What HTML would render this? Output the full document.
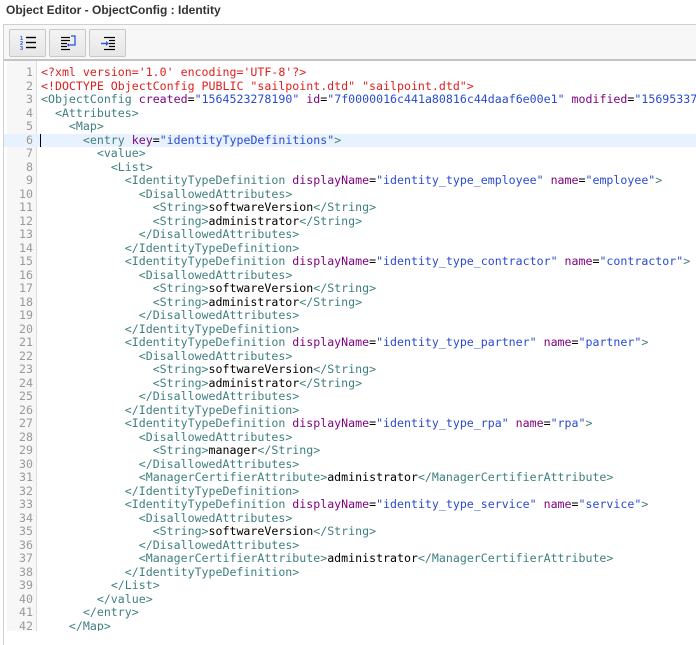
<!DOCTYPE html>
<html><head><meta charset="utf-8">
<style>
html,body{margin:0;padding:0;background:#fff;width:696px;height:623px;overflow:hidden}
.title{position:absolute;left:6px;top:3px;font:bold 12px "Liberation Sans",sans-serif;color:#333}
.panel{position:absolute;left:3px;top:24px;width:700px;height:620px;border-left:1px solid #d0d0d0;border-top:1px solid #d0d0d0}
.tb{position:absolute;left:4px;top:25px;width:700px;height:34px;background:#f7f7f7;border-bottom:2px solid #c4c4c4}
.btn{position:absolute;top:4px;width:35px;height:26px;border:1px solid #c8c8c8;border-radius:2px;background:linear-gradient(#f4f4f4,#e6e6e6)}
.btn svg{position:absolute;left:9px;top:5px}
.ed{position:absolute;left:4px;top:61px;width:700px;height:570px;background:#fff;overflow:hidden}
.gut{position:absolute;left:3px;top:0;width:29px;height:570px;background:#f7f7f7;border-right:1px solid #ddd}
.code{position:absolute;left:0;top:5px;width:700px;font:11.6px/13.5px "DejaVu Sans Mono",monospace}
.ln{height:13.5px;position:relative}
.ln .n{position:absolute;left:3px;width:26px;text-align:right;color:#999}
.ln .t{position:absolute;left:37px;color:#000;white-space:pre}
.act{background:#e8f2ff}
.p{color:#e01f1f}.g{color:#3f7f7f}.a{color:#7f007f}.v{color:#2a4bd0}.k{color:#000}
.cur{position:absolute;left:36px;top:0;width:1px;height:13.5px;background:#000}
</style></head><body>
<div class="title">Object Editor - ObjectConfig : Identity</div>
<div class="panel"></div>
<div class="tb">
 <div class="btn" style="left:5px"><svg width="18" height="16" viewBox="0 0 18 16"><g fill="#2b55d8" font-family="Liberation Sans" font-size="5.5" font-weight="bold"><text x="1" y="5">1</text><text x="1" y="10">2</text><text x="1" y="15">3</text></g><g stroke="#000" stroke-width="1.4"><line x1="7" y1="2.5" x2="17" y2="2.5"/><line x1="7" y1="7.5" x2="17" y2="7.5"/><line x1="7" y1="12.5" x2="17" y2="12.5"/></g></svg></div>
 <div class="btn" style="left:45px"><svg width="18" height="16" viewBox="0 0 18 16"><g stroke="#000" stroke-width="1.2"><line x1="2" y1="2.5" x2="11" y2="2.5"/><line x1="2" y1="5.5" x2="11" y2="5.5"/><line x1="2" y1="8.5" x2="8" y2="8.5"/><line x1="2" y1="11.5" x2="8" y2="11.5"/><line x1="2" y1="14.5" x2="11" y2="14.5"/></g><path d="M12 1h4v9h-6" fill="none" stroke="#2b55d8" stroke-width="1.3"/><path d="M10 8l-2 2 2 2z" fill="#2b55d8"/></svg></div>
 <div class="btn" style="left:85px"><svg width="18" height="16" viewBox="0 0 18 16"><g stroke="#000" stroke-width="1.2"><line x1="5" y1="2.5" x2="16" y2="2.5"/><line x1="10" y1="5.5" x2="16" y2="5.5"/><line x1="10" y1="8.5" x2="16" y2="8.5"/><line x1="10" y1="11.5" x2="16" y2="11.5"/><line x1="5" y1="14.5" x2="16" y2="14.5"/></g><path d="M2 8.5h5" stroke="#2b55d8" stroke-width="1.4"/><path d="M7 6l3 2.5-3 2.5z" fill="#2b55d8"/></svg></div>
</div>
<div class="ed">
<div class="gut"></div>
<div class="code">
<div class="ln"><span class="n">1</span><span class="t"><span class="p">&lt;?xml version='1.0' encoding='UTF-8'?&gt;</span></span></div>
<div class="ln"><span class="n">2</span><span class="t"><span class="p">&lt;!DOCTYPE ObjectConfig PUBLIC "sailpoint.dtd" "sailpoint.dtd"&gt;</span></span></div>
<div class="ln"><span class="n">3</span><span class="t"><span class="g">&lt;ObjectConfig</span> <span class="a">created</span>=<span class="v">"1564523278190"</span> <span class="a">id</span>=<span class="v">"7f0000016c441a80816c44daaf6e00e1"</span> <span class="a">modified</span>=<span class="v">"1569533700000"</span></span></div>
<div class="ln"><span class="n">4</span><span class="t">  <span class="g">&lt;Attributes&gt;</span></span></div>
<div class="ln"><span class="n">5</span><span class="t">    <span class="g">&lt;Map&gt;</span></span></div>
<div class="ln act"><span class="n">6</span><span class="cur"></span><span class="t">      <span class="g">&lt;entry</span> <span class="a">key</span>=<span class="v">"identityTypeDefinitions"</span><span class="g">&gt;</span></span></div>
<div class="ln"><span class="n">7</span><span class="t">        <span class="g">&lt;value&gt;</span></span></div>
<div class="ln"><span class="n">8</span><span class="t">          <span class="g">&lt;List&gt;</span></span></div>
<div class="ln"><span class="n">9</span><span class="t">            <span class="g">&lt;IdentityTypeDefinition</span> <span class="a">displayName</span>=<span class="v">"identity_type_employee"</span> <span class="a">name</span>=<span class="v">"employee"</span><span class="g">&gt;</span></span></div>
<div class="ln"><span class="n">10</span><span class="t">              <span class="g">&lt;DisallowedAttributes&gt;</span></span></div>
<div class="ln"><span class="n">11</span><span class="t">                <span class="g">&lt;String&gt;</span>softwareVersion<span class="g">&lt;/String&gt;</span></span></div>
<div class="ln"><span class="n">12</span><span class="t">                <span class="g">&lt;String&gt;</span>administrator<span class="g">&lt;/String&gt;</span></span></div>
<div class="ln"><span class="n">13</span><span class="t">              <span class="g">&lt;/DisallowedAttributes&gt;</span></span></div>
<div class="ln"><span class="n">14</span><span class="t">            <span class="g">&lt;/IdentityTypeDefinition&gt;</span></span></div>
<div class="ln"><span class="n">15</span><span class="t">            <span class="g">&lt;IdentityTypeDefinition</span> <span class="a">displayName</span>=<span class="v">"identity_type_contractor"</span> <span class="a">name</span>=<span class="v">"contractor"</span><span class="g">&gt;</span></span></div>
<div class="ln"><span class="n">16</span><span class="t">              <span class="g">&lt;DisallowedAttributes&gt;</span></span></div>
<div class="ln"><span class="n">17</span><span class="t">                <span class="g">&lt;String&gt;</span>softwareVersion<span class="g">&lt;/String&gt;</span></span></div>
<div class="ln"><span class="n">18</span><span class="t">                <span class="g">&lt;String&gt;</span>administrator<span class="g">&lt;/String&gt;</span></span></div>
<div class="ln"><span class="n">19</span><span class="t">              <span class="g">&lt;/DisallowedAttributes&gt;</span></span></div>
<div class="ln"><span class="n">20</span><span class="t">            <span class="g">&lt;/IdentityTypeDefinition&gt;</span></span></div>
<div class="ln"><span class="n">21</span><span class="t">            <span class="g">&lt;IdentityTypeDefinition</span> <span class="a">displayName</span>=<span class="v">"identity_type_partner"</span> <span class="a">name</span>=<span class="v">"partner"</span><span class="g">&gt;</span></span></div>
<div class="ln"><span class="n">22</span><span class="t">              <span class="g">&lt;DisallowedAttributes&gt;</span></span></div>
<div class="ln"><span class="n">23</span><span class="t">                <span class="g">&lt;String&gt;</span>softwareVersion<span class="g">&lt;/String&gt;</span></span></div>
<div class="ln"><span class="n">24</span><span class="t">                <span class="g">&lt;String&gt;</span>administrator<span class="g">&lt;/String&gt;</span></span></div>
<div class="ln"><span class="n">25</span><span class="t">              <span class="g">&lt;/DisallowedAttributes&gt;</span></span></div>
<div class="ln"><span class="n">26</span><span class="t">            <span class="g">&lt;/IdentityTypeDefinition&gt;</span></span></div>
<div class="ln"><span class="n">27</span><span class="t">            <span class="g">&lt;IdentityTypeDefinition</span> <span class="a">displayName</span>=<span class="v">"identity_type_rpa"</span> <span class="a">name</span>=<span class="v">"rpa"</span><span class="g">&gt;</span></span></div>
<div class="ln"><span class="n">28</span><span class="t">              <span class="g">&lt;DisallowedAttributes&gt;</span></span></div>
<div class="ln"><span class="n">29</span><span class="t">                <span class="g">&lt;String&gt;</span>manager<span class="g">&lt;/String&gt;</span></span></div>
<div class="ln"><span class="n">30</span><span class="t">              <span class="g">&lt;/DisallowedAttributes&gt;</span></span></div>
<div class="ln"><span class="n">31</span><span class="t">              <span class="g">&lt;ManagerCertifierAttribute&gt;</span>administrator<span class="g">&lt;/ManagerCertifierAttribute&gt;</span></span></div>
<div class="ln"><span class="n">32</span><span class="t">            <span class="g">&lt;/IdentityTypeDefinition&gt;</span></span></div>
<div class="ln"><span class="n">33</span><span class="t">            <span class="g">&lt;IdentityTypeDefinition</span> <span class="a">displayName</span>=<span class="v">"identity_type_service"</span> <span class="a">name</span>=<span class="v">"service"</span><span class="g">&gt;</span></span></div>
<div class="ln"><span class="n">34</span><span class="t">              <span class="g">&lt;DisallowedAttributes&gt;</span></span></div>
<div class="ln"><span class="n">35</span><span class="t">                <span class="g">&lt;String&gt;</span>softwareVersion<span class="g">&lt;/String&gt;</span></span></div>
<div class="ln"><span class="n">36</span><span class="t">              <span class="g">&lt;/DisallowedAttributes&gt;</span></span></div>
<div class="ln"><span class="n">37</span><span class="t">              <span class="g">&lt;ManagerCertifierAttribute&gt;</span>administrator<span class="g">&lt;/ManagerCertifierAttribute&gt;</span></span></div>
<div class="ln"><span class="n">38</span><span class="t">            <span class="g">&lt;/IdentityTypeDefinition&gt;</span></span></div>
<div class="ln"><span class="n">39</span><span class="t">          <span class="g">&lt;/List&gt;</span></span></div>
<div class="ln"><span class="n">40</span><span class="t">        <span class="g">&lt;/value&gt;</span></span></div>
<div class="ln"><span class="n">41</span><span class="t">      <span class="g">&lt;/entry&gt;</span></span></div>
<div class="ln"><span class="n">42</span><span class="t">    <span class="g">&lt;/Map&gt;</span></span></div>
</div>
</div>
</body></html>
